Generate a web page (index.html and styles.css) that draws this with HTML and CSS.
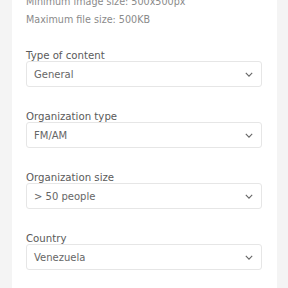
FILE: index.html
```html
<!DOCTYPE html>
<html lang="en">
<head>
    <meta charset="UTF-8">
    <meta name="viewport" content="width=device-width, initial-scale=1.0">
    <title>Organization details</title>
    <link rel="stylesheet" href="styles.css">
</head>
<body>
    <div class="card">
        <div class="hints">
            <p>Minimum image size: 500x500px</p>
            <p>Maximum file size: 500KB</p>
        </div>

        <div class="form-group">
            <label>Type of content</label>
            <div class="select">
                <span>General</span>
                <svg class="chevron" viewBox="0 0 10 6" width="8" height="5"><path d="M1 1l4 4 4-4"/></svg>
            </div>
        </div>

        <div class="form-group">
            <label>Organization type</label>
            <div class="select">
                <span>FM/AM</span>
                <svg class="chevron" viewBox="0 0 10 6" width="8" height="5"><path d="M1 1l4 4 4-4"/></svg>
            </div>
        </div>

        <div class="form-group">
            <label>Organization size</label>
            <div class="select">
                <span>&gt; 50 people</span>
                <svg class="chevron" viewBox="0 0 10 6" width="8" height="5"><path d="M1 1l4 4 4-4"/></svg>
            </div>
        </div>

        <div class="form-group">
            <label>Country</label>
            <div class="select">
                <span>Venezuela</span>
                <svg class="chevron" viewBox="0 0 10 6" width="8" height="5"><path d="M1 1l4 4 4-4"/></svg>
            </div>
        </div>
    </div>
</body>
</html>
```

FILE: styles.css
```css
body {
    margin: 0;
    background-color: #f4f4f4;
    font-family: "DejaVu Sans", "Open Sans", sans-serif;
}
.card {
    background: white;
    margin: -7px 11px 0 12px;
    padding: 0 15px 40px 14px;
}
.hints p {
    margin: 0;
    font-size: 9.6px;
    line-height: 18px;
    color: #8a8a8a;
}
.hints {
    margin-bottom: 20px;
}
.form-group {
    margin-bottom: 23px;
}
label {
    display: block;
    font-size: 10.2px;
    line-height: 14px;
    margin-bottom: -2px;
    color: #5a5a5a;
}
.select {
    display: flex;
    align-items: center;
    justify-content: space-between;
    height: 24px;
    padding: 0 7px;
    border: 1px solid #e6e6e6;
    border-radius: 3px;
    font-size: 10px;
    color: #666;
}
.chevron {
    fill: none;
    stroke: #666;
    stroke-width: 1.4;
    margin-right: 1px;
}
```
